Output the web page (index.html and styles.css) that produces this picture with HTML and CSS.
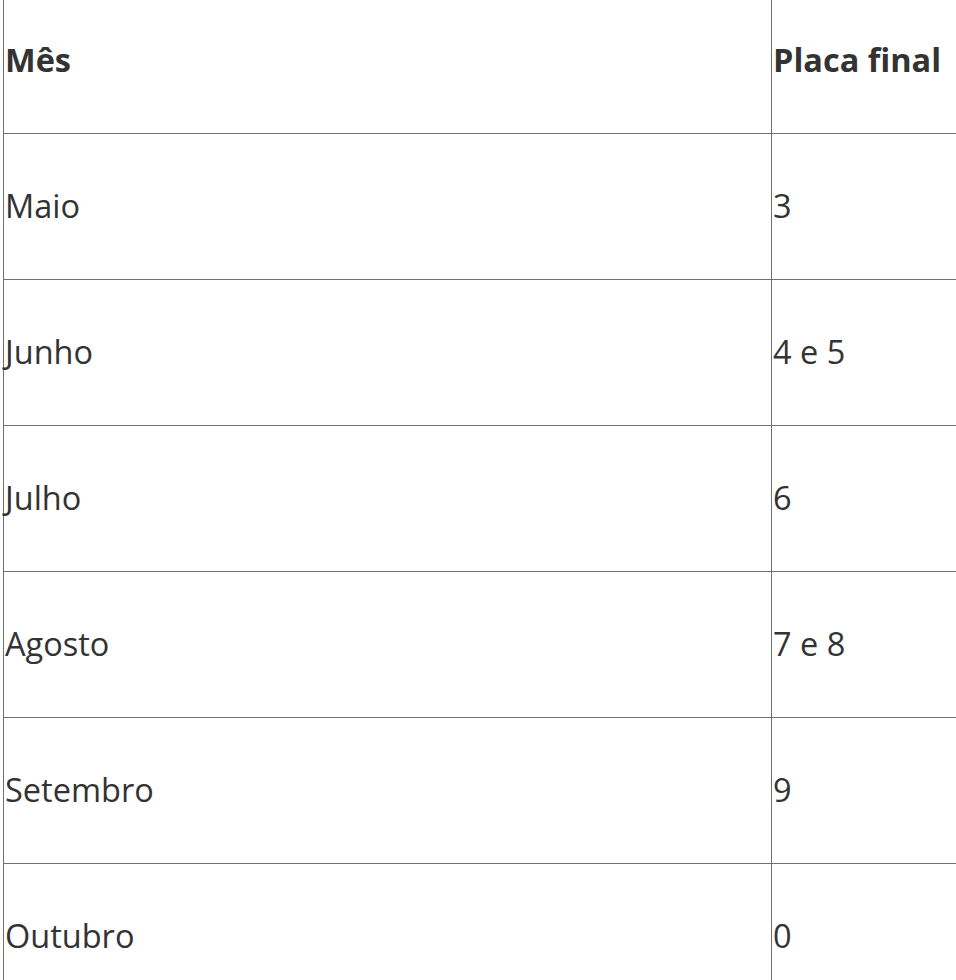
FILE: index.html
```html
<!DOCTYPE html>
<html lang="pt">
<head>
<meta charset="utf-8">
<link rel="stylesheet" href="styles.css">
</head>
<body>
<table class="plates">
<thead>
<tr><th class="month">Mês</th><th class="plate">Placa final</th></tr>
</thead>
<tbody>
<tr><td class="month">Maio</td><td class="plate">3</td></tr>
<tr><td class="month">Junho</td><td class="plate">4 e 5</td></tr>
<tr><td class="month">Julho</td><td class="plate">6</td></tr>
<tr><td class="month">Agosto</td><td class="plate">7 e 8</td></tr>
<tr><td class="month">Setembro</td><td class="plate">9</td></tr>
<tr><td class="month">Outubro</td><td class="plate">0</td></tr>
</tbody>
</table>
</body>
</html>
```
FILE: styles.css
```css
html, body {
  margin: 0;
  padding: 0;
  background: #fff;
  overflow: hidden;
}
body {
  padding-left: 3px;
}
.plates {
  border-collapse: collapse;
  margin-top: -13px;
  width: 1000px;
  table-layout: fixed;
  font-family: "Open Sans", sans-serif;
  font-size: 32.5px;
  color: #333;
}
.plates th,
.plates td {
  border: 1px solid #707070;
  height: 146px;
  padding: 0 0 2px 1px;
  text-align: left;
  vertical-align: middle;
  box-sizing: border-box;
}
.plates th {
  font-weight: 700;
}
.plates td {
  font-weight: 400;
}
.month {
  width: 768px;
}
```
